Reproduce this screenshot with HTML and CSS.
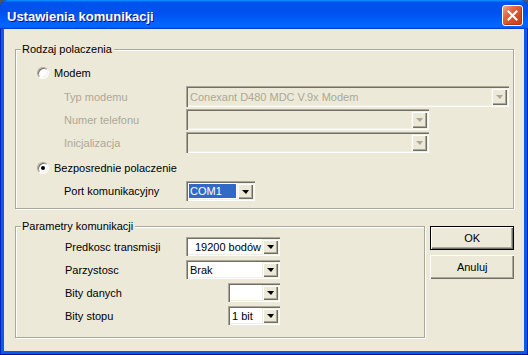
FILE: index.html
```html
<!DOCTYPE html>
<html lang="pl">
<head>
  <meta charset="UTF-8">
  <title>Ustawienia komunikacji</title>
  <link rel="stylesheet" href="styles.css">
</head>
<body>
  <div class="window">
    <div class="titlebar">
      <span class="title">Ustawienia komunikacji</span>
      <div class="close">
        <svg width="11" height="11" viewBox="0 0 11 11"><path d="M1.5 1.5 L9.5 9.5 M9.5 1.5 L1.5 9.5" stroke="#fff" stroke-width="2" stroke-linecap="square"/></svg>
      </div>
    </div>
    <div class="client">
      <div class="group g-type">
        <span class="legend">Rodzaj polaczenia</span>
        <div class="radio-row">
          <span class="radio"></span>
          <span>Modem</span>
        </div>
        <div class="field">
          <span class="label disabled">Typ modemu</span>
          <div class="combo off tall w-modem">
            <span class="value">Conexant D480 MDC V.9x Modem</span>
            <span class="arrow"></span>
          </div>
        </div>
        <div class="field">
          <span class="label disabled">Numer telefonu</span>
          <div class="combo off tall w-line">
            <span class="value"></span>
            <span class="arrow"></span>
          </div>
        </div>
        <div class="field">
          <span class="label disabled">Inicjalizacja</span>
          <div class="combo off tall w-line">
            <span class="value"></span>
            <span class="arrow"></span>
          </div>
        </div>
        <div class="radio-row">
          <span class="radio on"></span>
          <span>Bezposrednie polaczenie</span>
        </div>
        <div class="field">
          <span class="label">Port komunikacyjny</span>
          <div class="combo w-port">
            <span class="value selected">COM1</span>
            <span class="arrow"></span>
          </div>
        </div>
      </div>

      <div class="bottom">
        <div class="group g-params">
          <span class="legend">Parametry komunikacji</span>
          <div class="field">
            <span class="label">Predkosc transmisji</span>
            <div class="combo w-wide">
              <span class="value right">19200 bodów</span>
              <span class="arrow"></span>
            </div>
          </div>
          <div class="field">
            <span class="label">Parzystosc</span>
            <div class="combo w-wide">
              <span class="value">Brak</span>
              <span class="arrow"></span>
            </div>
          </div>
          <div class="field">
            <span class="label">Bity danych</span>
            <div class="combo w-small">
              <span class="value"></span>
              <span class="arrow"></span>
            </div>
          </div>
          <div class="field">
            <span class="label">Bity stopu</span>
            <div class="combo w-small">
              <span class="value">1 bit</span>
              <span class="arrow"></span>
            </div>
          </div>
        </div>
        <div class="buttons">
          <div class="button default">OK</div>
          <div class="button">Anuluj</div>
        </div>
      </div>
    </div>
  </div>
</body>
</html>
```
FILE: styles.css
```css
* {
  box-sizing: border-box;
}
body {
  margin: 0;
  background-color: #4a5468;
  font-family: 'Liberation Sans', Arial, sans-serif;
  font-size: 11px;
  color: #000;
}
.window {
  width: 528px;
  height: 355px;
  display: flex;
  flex-direction: column;
  background-color: #0a5be8;
  border-radius: 8px 8px 0 0;
  overflow: hidden;
  box-shadow: inset 1px 0 #0024b8, inset -1px 0 #00138c, inset 0 -1px #00138c;
}
.titlebar {
  height: 29px;
  flex: none;
  display: flex;
  align-items: center;
  justify-content: space-between;
  padding: 1px 5px 0 7px;
  background: linear-gradient(180deg, #0997ff, #0053ee 8%, #0050ee 40%, #0066ff 88%, #0066ff 93%, #005bff 95%, #003dd7 96%, #003dd7);
}
.title {
  font-family: 'Liberation Sans', Arial, sans-serif;
  font-weight: bold;
  font-size: 13px;
  color: #fff;
  text-shadow: 1px 1px #0f1089;
  padding-top: 2px;
}
.close {
  width: 21px;
  height: 21px;
  border: 1px solid #fff;
  border-radius: 3px;
  display: flex;
  align-items: center;
  justify-content: center;
  background: linear-gradient(135deg, #f4a58a 0%, #e3643c 35%, #d4481f 70%, #c2401c 100%);
  box-shadow: inset -1px -1px #b23a14;
}
.client {
  flex: 1;
  margin: 0 4px 4px;
  background-color: #ece9d8;
  padding: 20px 10px 0 11px;
}
.group {
  position: relative;
  border: 1px solid #aca899;
  box-shadow: inset 1px 1px #fff, 1px 1px #fff;
}
.legend {
  position: absolute;
  top: -7px;
  left: 5px;
  padding: 0 2px 0 1px;
  line-height: 13px;
  background-color: #ece9d8;
}
.g-type {
  padding: 16px 0 7px 21px;
}
.g-params {
  width: 412px;
  padding: 10px 0 12px 49px;
}
.g-type .field {
  padding-left: 27px;
}
.radio-row {
  height: 14px;
  display: flex;
  align-items: center;
  gap: 5px;
}
.radio {
  width: 12px;
  height: 12px;
  border-radius: 50%;
  border: 1px solid;
  border-color: #aca899 #fff #fff #aca899;
  background-color: #fff;
  box-shadow: inset 1px 1px #716f64, inset -1px -1px #f1efe2;
  display: flex;
  align-items: center;
  justify-content: center;
}
.radio.on::after {
  content: '';
  width: 4px;
  height: 4px;
  border-radius: 50%;
  background-color: #000;
}
.field {
  display: flex;
  align-items: center;
}
.radio-row + .field {
  margin-top: 6px;
}
.field + .field {
  margin-top: 2px;
}
.field + .radio-row {
  margin-top: 8px;
}
.g-params .field + .field {
  margin-top: 4px;
}
.label {
  width: 122px;
  flex: none;
}
.g-params .label {
  width: 121px;
}
.disabled {
  color: #aca899;
}
.combo {
  height: 19px;
  display: flex;
  padding: 2px;
  background-color: #fff;
  box-shadow: inset 1px 1px #aca899, inset 2px 2px #716f64, inset -1px -1px #fff, inset -2px -2px #f1efe2;
}
.combo.tall {
  height: 21px;
}
.combo.off {
  background-color: #ece9d8;
  color: #aca899;
}
.w-modem { width: 323px; }
.w-line { width: 243px; }
.w-port { width: 69px; height: 20px; }
.w-wide { width: 94px; }
.w-small { width: 52px; margin-left: 42px; }
.value {
  flex: 1;
  display: flex;
  align-items: center;
  padding: 0 2px;
  white-space: nowrap;
  overflow: hidden;
}
.value.right {
  justify-content: flex-end;
  padding-right: 1px;
}
.value.selected {
  margin: 1px 1px 1px 1px;
  padding-left: 1px;
  background-color: #316ac5;
  color: #fff;
}
.arrow {
  width: 16px;
  flex: none;
  display: flex;
  align-items: center;
  justify-content: center;
  background-color: #ece9d8;
  box-shadow: inset 1px 1px #f1efe2, inset 2px 2px #fff, inset -1px -1px #716f64, inset -2px -2px #aca899;
}
.arrow::after {
  content: '';
  width: 0;
  height: 0;
  margin-top: 1px;
  border-left: 4px solid transparent;
  border-right: 3px solid transparent;
  border-top: 4px solid #000;
}
.off .arrow::after {
  border-top-color: #aca899;
}
.bottom {
  display: flex;
  margin-top: 17px;
}
.buttons {
  width: 84px;
  margin-left: 5px;
}
.button {
  height: 24px;
  display: flex;
  align-items: center;
  justify-content: center;
  background-color: #ece9d8;
  box-shadow: inset 1px 1px #fff, inset -1px -1px #716f64, inset -2px -2px #aca899;
}
.button.default {
  border: 1px solid #000;
}
.button + .button {
  margin-top: 5px;
}
```
